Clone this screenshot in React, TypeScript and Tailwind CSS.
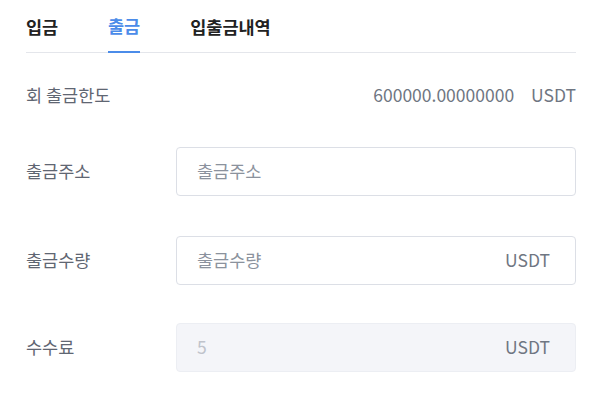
import React from 'react';

const font = { fontFamily: '"Noto Sans CJK KR", "Noto Sans", sans-serif' };

const Field: React.FC<{ label: string; placeholder?: string; value?: string; unit?: boolean; disabled?: boolean }> = ({
  label,
  placeholder,
  value,
  unit,
  disabled,
}) => (
  <div className="flex items-center">
    <div className="w-[150px] text-[17.5px] text-[#5f6672]">{label}</div>
    <div
      className={`flex-1 h-[49px] rounded-[4px] border flex items-center justify-between pl-[20px] pr-[25px] ${
        disabled ? 'bg-[#f4f5f9] border-[#eceef3]' : 'bg-white border-[#dcdfe6]'
      }`}
    >
      {value ? (
        <span className="text-[17.5px] text-[#bfc3cb]">{value}</span>
      ) : (
        <span className="text-[17.5px] text-[#8b929d]">{placeholder}</span>
      )}
      {unit && <span className="text-[17.5px] text-[#6f7682]">USDT</span>}
    </div>
  </div>
);

export default function App() {
  return (
    <div className="w-[605px] h-[409px] bg-white pl-[26px] pr-[29px]" style={font}>
      <div className="flex border-b border-[#e4e6eb] h-[53px] items-end">
        <div className="w-[82px] pb-[12px] text-[17.5px] font-bold text-[#222]">입금</div>
        <div className="mr-[50px] pb-[12px] text-[17.5px] font-bold text-[#4b8ce9] border-b-2 border-[#4b8ce9] -mb-px">출금</div>
        <div className="pb-[12px] text-[17.5px] font-bold text-[#222]">입출금내역</div>
      </div>
      <div className="flex items-center justify-between h-[86px] pb-[2px]">
        <span className="text-[17.5px] text-[#5f6672]">회 출금한도</span>
        <span className="text-[17.5px] text-[#6f7682]">
          600000.00000000<span className="ml-[17px]">USDT</span>
        </span>
      </div>
      <div className="flex flex-col pt-[8px]">
        <Field label="출금주소" placeholder="출금주소" />
        <div className="h-[40px]" />
        <Field label="출금수량" placeholder="출금수량" unit />
        <div className="h-[38px]" />
        <Field label="수수료" value="5" unit disabled />
      </div>
    </div>
  );
}
